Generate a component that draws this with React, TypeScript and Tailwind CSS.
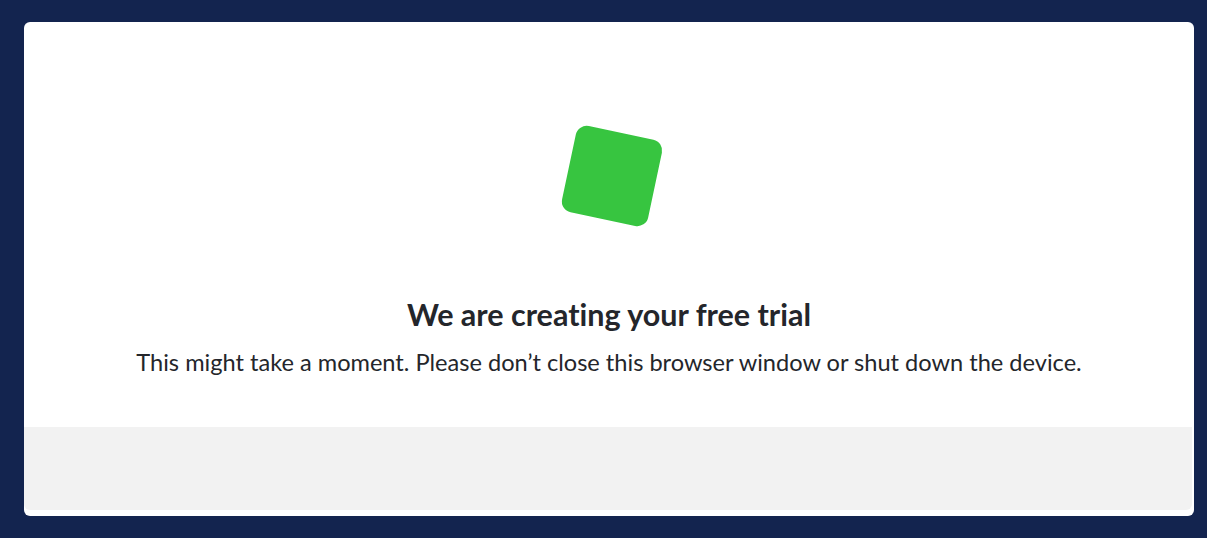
export default function App() {
  return (
    <div className="min-h-[538px] w-full bg-[#13244f] px-6 pt-[22px] pb-[22px]" style={{ fontFamily: "Lato, 'Open Sans', sans-serif" }}>
      <div className="flex w-[1170px] flex-col overflow-hidden rounded-md bg-white pb-[6px] [font-variant-ligatures:none]">
        <div className="flex h-[405px] flex-col items-center">
          <div className="mt-[110px] ml-[6px] h-[88px] w-[88px] rotate-[12deg] rounded-[11px] bg-[#37c540]" />
          <h1 className="mt-[76px] text-[30.5px] font-bold leading-[36px] text-[#24262b]">
            We are creating your free trial
          </h1>
          <p className="mt-[15px] text-[23.6px] leading-[30px] text-[#24262b]">
            This might take a moment. Please don’t close this browser window or shut down the device.
          </p>
        </div>
        <div className="mr-[2px] h-[83px] rounded-b-md bg-[#f2f2f2]" />
      </div>
    </div>
  );
}
